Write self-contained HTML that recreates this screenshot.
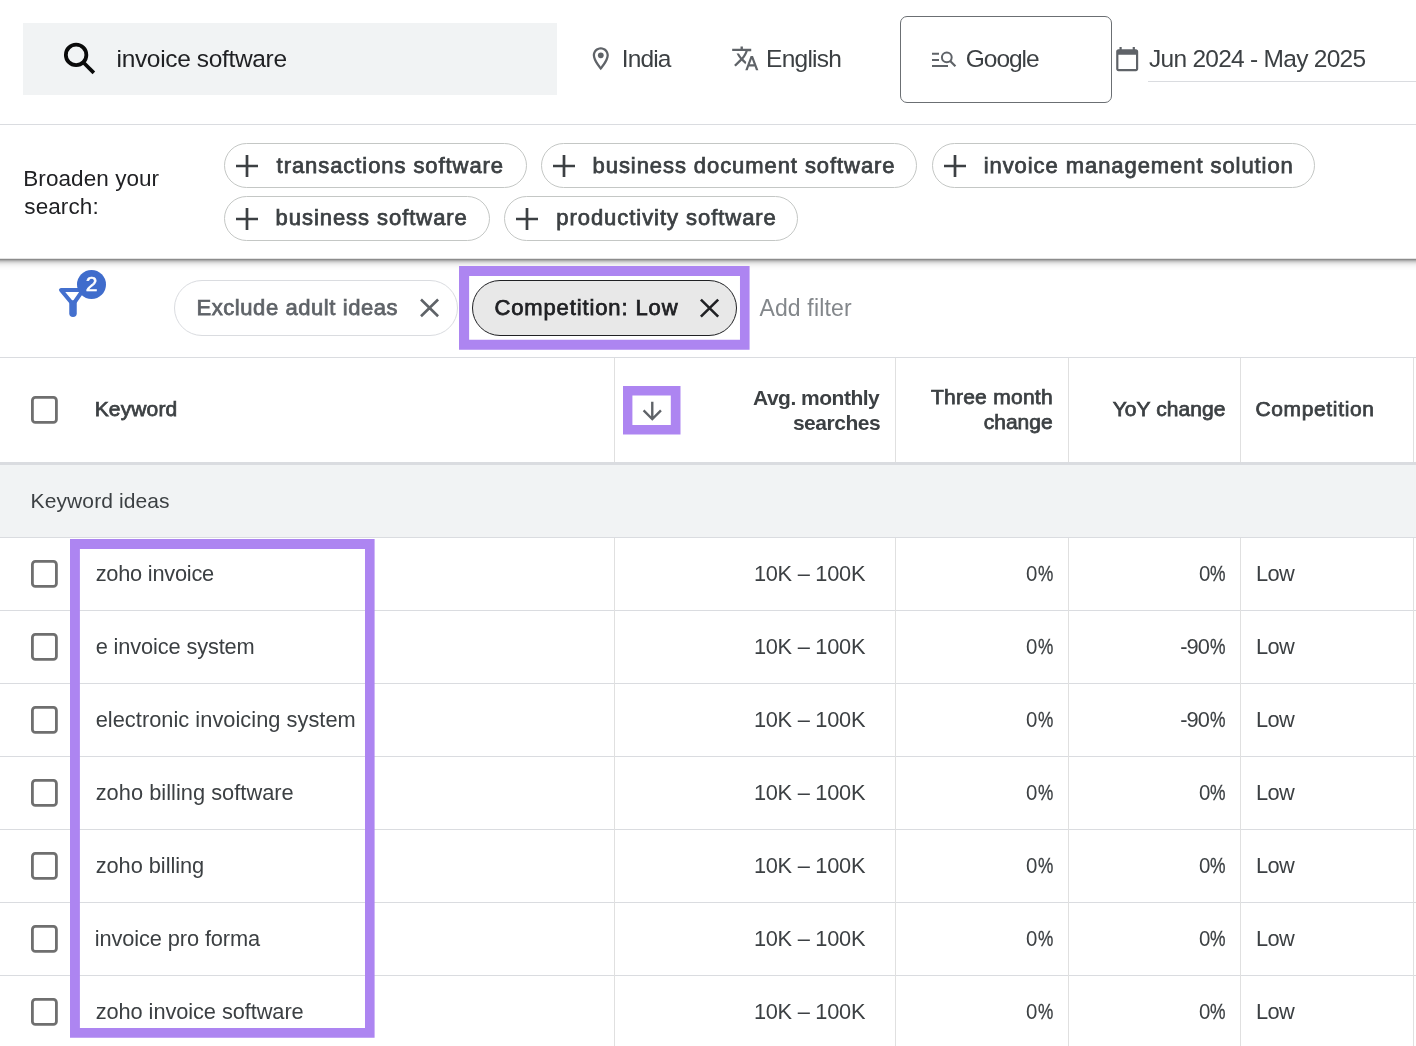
<!DOCTYPE html>
<html lang="en">
<head>
<meta charset="utf-8">
<title>Keyword ideas</title>
<style>
html,body{margin:0;padding:0;background:#fff;}
body{font-family:"Liberation Sans",sans-serif;-webkit-font-smoothing:antialiased;}
#root{position:relative;width:1416px;height:1046px;overflow:hidden;background:#fff;will-change:transform;}
#root>*{position:absolute;box-sizing:border-box;}
.t{white-space:nowrap;font-weight:400;}
.m{-webkit-text-stroke:0.75px currentColor;}
.b{font-weight:700;}
.p{-webkit-text-stroke:0.3px currentColor;}
.hl{background:#dadce0;}
.vl{background:#e0e0e0;width:1px;}
.chip{border:1px solid #c4c7c5;border-radius:23px;background:#fff;}
svg{overflow:visible;}

</style>
</head>
<body>
<div id="root">
<div style="left:23px;top:23px;width:534px;height:72px;background:#f1f3f4"></div>
<svg style="left:60px;top:40px" width="40" height="38" viewBox="60 40 40 38"><circle cx="76.1" cy="54.9" r="10.25" fill="none" stroke="#0a0a0a" stroke-width="3.8"/><path d="M83.2 62.2L93.85 72.85" stroke="#0a0a0a" stroke-width="3.7" fill="none"/></svg>
<svg style="left:586.65px;top:44.70px" width="27.60" height="27.60" viewBox="0 0 24 24" fill="#5f6368"><path d="M12 2C8.13 2 5 5.13 5 9c0 5.25 7 13 7 13s7-7.75 7-13c0-3.87-3.13-7-7-7zM7 9c0-2.76 2.24-5 5-5s5 2.24 5 5c0 2.88-2.88 7.19-5 9.88C9.92 16.21 7 11.85 7 9z"/><circle cx="12" cy="9" r="2.5"/></svg>
<svg style="left:730.81px;top:44.12px" width="28.56" height="28.56" viewBox="0 0 24 24" fill="#5f6368"><path d="M12.87 15.07l-2.54-2.51.03-.03c1.74-1.94 2.98-4.17 3.71-6.53H17V4h-7V2H8v2H1v1.99h11.17C11.5 7.92 10.44 9.75 9 11.35 8.07 10.32 7.3 9.19 6.69 8h-2c.73 1.63 1.73 3.17 2.98 4.56l-5.09 5.02L4 19l5-5 3.11 3.11.76-2.04zM18.5 10h-2L12 22h2l1.12-3h4.75L21 22h2l-4.5-12zm-2.62 7l1.62-4.33L19.12 17h-3.24z"/></svg>
<div style="left:900px;top:16px;width:212px;height:87px;border:1px solid #6b6f73;border-radius:7px"></div>
<svg style="left:930px;top:50px" width="28" height="20" viewBox="930 50 28 20"><path d="M932 53.8h7M932 59.9h7M932 65.9h16" stroke="#5f6368" stroke-width="2" fill="none"/><circle cx="946.8" cy="57.3" r="4.9" fill="none" stroke="#5f6368" stroke-width="2"/><path d="M950.2 60.9l5.2 5.3" stroke="#5f6368" stroke-width="2.2" fill="none"/></svg>
<svg style="left:1113.80px;top:46.00px" width="26.40" height="26.40" viewBox="0 0 24 24" fill="#5f6368"><path d="M20 3h-1V1h-2v2H7V1H5v2H4c-1.1 0-2 .9-2 2v16c0 1.1.9 2 2 2h16c1.1 0 2-.9 2-2V5c0-1.1-.9-2-2-2zm0 18H4V8h16v13z"/></svg>
<div class="hl" style="left:1148px;top:81px;width:268px;height:1px"></div>
<div class="hl" style="left:0;top:124px;width:1416px;height:1px"></div>
<div class="chip" style="left:224px;top:143px;width:303px;height:45px"></div>
<svg style="left:235.60px;top:154.70px" width="22" height="22" viewBox="0 0 22 22"><path d="M11 0v22M0 11h22" stroke="#3c4043" stroke-width="2.7" fill="none"/></svg>
<div class="chip" style="left:541.3px;top:143px;width:376.2px;height:45px"></div>
<svg style="left:552.90px;top:154.70px" width="22" height="22" viewBox="0 0 22 22"><path d="M11 0v22M0 11h22" stroke="#3c4043" stroke-width="2.7" fill="none"/></svg>
<div class="chip" style="left:932px;top:143px;width:382.7px;height:45px"></div>
<svg style="left:943.60px;top:154.70px" width="22" height="22" viewBox="0 0 22 22"><path d="M11 0v22M0 11h22" stroke="#3c4043" stroke-width="2.7" fill="none"/></svg>
<div class="chip" style="left:224px;top:196px;width:266px;height:45px"></div>
<svg style="left:235.60px;top:207.70px" width="22" height="22" viewBox="0 0 22 22"><path d="M11 0v22M0 11h22" stroke="#3c4043" stroke-width="2.7" fill="none"/></svg>
<div class="chip" style="left:504px;top:196px;width:294.2px;height:45px"></div>
<svg style="left:515.60px;top:207.70px" width="22" height="22" viewBox="0 0 22 22"><path d="M11 0v22M0 11h22" stroke="#3c4043" stroke-width="2.7" fill="none"/></svg>
<div style="left:0;top:258px;width:1416px;height:12px;background:linear-gradient(to bottom,#e3e3e3 0px,#e3e3e3 1px,#8c8c8c 1px,#8c8c8c 2px,#ababab 2px,#ababab 3px,#c5c5c5 3px,#c5c5c5 4px,#d7d7d7 4px,#d7d7d7 5px,#e4e4e4 5px,#e4e4e4 6px,#ededed 6px,#ededed 7px,#f3f3f3 7px,#f3f3f3 8px,#f7f7f7 8px,#f7f7f7 9px,#fafafa 9px,#fafafa 10px,#fcfcfc 10px,#fcfcfc 11px,#fdfdfd 11px,#fdfdfd 12px)"></div>
<svg style="left:55px;top:268px" width="56" height="54" viewBox="0 0 56 54"><path d="M6 22h22L18 36.5z" fill="none" stroke="#4470ce" stroke-width="4" stroke-linejoin="round"/><path d="M18 36v9.3" stroke="#4470ce" stroke-width="7.5" stroke-linecap="round" fill="none"/><circle cx="36.5" cy="16.5" r="14.5" fill="#3f6ccc"/><text x="36.5" y="22.7" text-anchor="middle" font-family="'Liberation Sans',sans-serif" font-size="21" font-weight="400" fill="#fff" stroke="#fff" stroke-width="0.6">2</text></svg>
<div style="left:174px;top:280px;width:284px;height:55.5px;border:1px solid #dadce0;border-radius:28px;background:#fff"></div>
<svg style="left:420px;top:298px" width="20" height="20" viewBox="420 298 20 20"><path d="M421 299.5L438.1 316.2M438.1 299.5L421 316.2" stroke="#5f6368" stroke-width="2.6" fill="none"/></svg>
<div style="left:472px;top:280px;width:265px;height:55.7px;border:1.3px solid #202124;border-radius:28px;background:#e8e8e8"></div>
<svg style="left:699px;top:298px" width="21" height="20" viewBox="699 298 21 20"><path d="M700.9 299.6L718.2 316.6M718.2 299.6L700.9 316.6" stroke="#202124" stroke-width="2.6" fill="none"/></svg>
<div class="hl" style="left:0;top:357px;width:1416px;height:1px"></div>
<div style="left:0;top:465px;width:1416px;height:72px;background:#f1f3f4"></div>
<div style="left:0;top:462px;width:1416px;height:3px;background:#dadce0"></div>
<div class="hl" style="left:0;top:537px;width:1416px;height:1px"></div>
<div class="hl" style="left:0;top:610px;width:1416px;height:1px"></div>
<div class="hl" style="left:0;top:683px;width:1416px;height:1px"></div>
<div class="hl" style="left:0;top:756px;width:1416px;height:1px"></div>
<div class="hl" style="left:0;top:829px;width:1416px;height:1px"></div>
<div class="hl" style="left:0;top:902px;width:1416px;height:1px"></div>
<div class="hl" style="left:0;top:975px;width:1416px;height:1px"></div>
<div class="vl" style="left:614px;top:358px;height:104px"></div>
<div class="vl" style="left:614px;top:538px;height:508px"></div>
<div class="vl" style="left:895px;top:358px;height:104px"></div>
<div class="vl" style="left:895px;top:538px;height:508px"></div>
<div class="vl" style="left:1068px;top:358px;height:104px"></div>
<div class="vl" style="left:1068px;top:538px;height:508px"></div>
<div class="vl" style="left:1240px;top:358px;height:104px"></div>
<div class="vl" style="left:1240px;top:538px;height:508px"></div>
<div class="vl" style="left:1413px;top:358px;height:104px"></div>
<div class="vl" style="left:1413px;top:538px;height:508px"></div>
<svg style="left:31.1px;top:396px" width="27" height="28" viewBox="0 0 27 28"><rect x="1.4" y="1.4" width="24" height="25" rx="3" fill="#fff" stroke="#6f6f6f" stroke-width="2.8"/></svg>
<svg style="left:31.1px;top:559.9px" width="27" height="28" viewBox="0 0 27 28"><rect x="1.4" y="1.4" width="24" height="25" rx="3" fill="#fff" stroke="#6f6f6f" stroke-width="2.8"/></svg>
<svg style="left:31.1px;top:632.9px" width="27" height="28" viewBox="0 0 27 28"><rect x="1.4" y="1.4" width="24" height="25" rx="3" fill="#fff" stroke="#6f6f6f" stroke-width="2.8"/></svg>
<svg style="left:31.1px;top:705.9px" width="27" height="28" viewBox="0 0 27 28"><rect x="1.4" y="1.4" width="24" height="25" rx="3" fill="#fff" stroke="#6f6f6f" stroke-width="2.8"/></svg>
<svg style="left:31.1px;top:778.9px" width="27" height="28" viewBox="0 0 27 28"><rect x="1.4" y="1.4" width="24" height="25" rx="3" fill="#fff" stroke="#6f6f6f" stroke-width="2.8"/></svg>
<svg style="left:31.1px;top:851.9px" width="27" height="28" viewBox="0 0 27 28"><rect x="1.4" y="1.4" width="24" height="25" rx="3" fill="#fff" stroke="#6f6f6f" stroke-width="2.8"/></svg>
<svg style="left:31.1px;top:924.9px" width="27" height="28" viewBox="0 0 27 28"><rect x="1.4" y="1.4" width="24" height="25" rx="3" fill="#fff" stroke="#6f6f6f" stroke-width="2.8"/></svg>
<svg style="left:31.1px;top:997.9px" width="27" height="28" viewBox="0 0 27 28"><rect x="1.4" y="1.4" width="24" height="25" rx="3" fill="#fff" stroke="#6f6f6f" stroke-width="2.8"/></svg>
<svg style="left:638.24px;top:397.24px" width="28.56" height="28.56" viewBox="0 0 24 24" fill="#5f6368"><path d="M20 12l-1.41-1.41L13 16.17V4h-2v12.17l-5.58-5.59L4 12l8 8 8-8z"/></svg>
<svg style="left:459px;top:266.3px" width="290.60" height="83.70" viewBox="459 266.3 290.60 83.70"><path fill="#ad85f1" fill-rule="evenodd" d="M459 266.3H749.6V350H459zM469.1 276.4V340H740V276.4z"/></svg>
<svg style="left:623.3px;top:386.2px" width="57.50" height="48.50" viewBox="623.3 386.2 57.50 48.50"><path fill="#ad85f1" fill-rule="evenodd" d="M623.3 386.2H680.8V434.7H623.3zM632.7 395.8V425.1H671.1V395.8z"/></svg>
<svg style="left:70.1px;top:539.1px" width="304.60" height="498.70" viewBox="70.1 539.1 304.60 498.70"><path fill="#ad85f1" fill-rule="evenodd" d="M70.1 539.1H374.7V1037.8H70.1zM80 549V1028.2H365.1V549z"/></svg>
<span class="t" style="left:116.6px;top:44px;font-size:24.5px;line-height:29px;letter-spacing:-0.349px;color:#202124">invoice software</span>
<span class="t" style="left:621.8px;top:44px;font-size:24.5px;line-height:29px;letter-spacing:-0.875px;color:#3c4043">India</span>
<span class="t" style="left:766.1px;top:44px;font-size:24.5px;line-height:29px;letter-spacing:-0.755px;color:#3c4043">English</span>
<span class="t" style="left:965.8px;top:44px;font-size:24.5px;line-height:29px;letter-spacing:-1.035px;color:#3c4043">Google</span>
<span class="t" style="left:1149px;top:44px;font-size:24.5px;line-height:29px;letter-spacing:-0.725px;color:#3c4043">Jun 2024 - May 2025</span>
<span class="t" style="left:23.3px;top:165px;font-size:22.5px;line-height:27px;letter-spacing:0.064px;color:#202124">Broaden your</span>
<span class="t" style="left:24.3px;top:193px;font-size:22.5px;line-height:27px;letter-spacing:0.095px;color:#202124">search:</span>
<span class="t m" style="left:276.62px;top:153px;font-size:22px;line-height:26px;letter-spacing:0.931px;color:#3c4043">transactions software</span>
<span class="t m" style="left:592.58px;top:153px;font-size:22px;line-height:26px;letter-spacing:0.927px;color:#3c4043">business document software</span>
<span class="t m" style="left:983.67px;top:153px;font-size:22px;line-height:26px;letter-spacing:0.932px;color:#3c4043">invoice management solution</span>
<span class="t m" style="left:275.62px;top:205px;font-size:22px;line-height:26px;letter-spacing:0.947px;color:#3c4043">business software</span>
<span class="t m" style="left:556.27px;top:205px;font-size:22px;line-height:26px;letter-spacing:0.953px;color:#3c4043">productivity software</span>
<span class="t m" style="left:196.38px;top:295px;font-size:22px;line-height:26px;letter-spacing:0.581px;color:#5f6368">Exclude adult ideas</span>
<span class="t m" style="left:494.38px;top:295px;font-size:22px;line-height:26px;letter-spacing:0.878px;color:#202124">Competition: Low</span>
<span class="t" style="left:759.4px;top:294px;font-size:23px;line-height:28px;letter-spacing:0.166px;color:#83878b">Add filter</span>
<span class="t m" style="left:94.67px;top:396px;font-size:21px;line-height:25px;letter-spacing:0.154px;color:#3c4043">Keyword</span>
<span class="t b" style="left:753px;top:385px;font-size:21px;line-height:25px;letter-spacing:-0.495px;color:#3c4043">Avg. monthly</span>
<span class="t b" style="left:792.9px;top:410px;font-size:21px;line-height:25px;letter-spacing:-0.457px;color:#3c4043">searches</span>
<span class="t m" style="left:930.88px;top:384px;font-size:21px;line-height:25px;letter-spacing:0.267px;color:#3c4043">Three month</span>
<span class="t m" style="left:983.67px;top:409px;font-size:21px;line-height:25px;letter-spacing:0.027px;color:#3c4043">change</span>
<span class="t m" style="left:1112.67px;top:396px;font-size:21px;line-height:25px;letter-spacing:0.07px;color:#3c4043">YoY change</span>
<span class="t m" style="left:1255.38px;top:396px;font-size:21px;line-height:25px;letter-spacing:0.657px;color:#3c4043">Competition</span>
<span class="t" style="left:30.6px;top:488px;font-size:21px;line-height:25px;letter-spacing:0.105px;color:#3c4043">Keyword ideas</span>
<span class="t" style="left:95.7px;top:561px;font-size:21.8px;line-height:26px;letter-spacing:-0.241px;color:#3c4043">zoho invoice</span>
<span class="t" style="left:753.9px;top:561px;font-size:21.8px;line-height:26px;letter-spacing:-0.265px;color:#3c4043">10K – 100K</span>
<span class="t" style="left:1025.75px;top:561px;font-size:21.8px;line-height:26px;transform:scaleX(0.9375);transform-origin:0 0;color:#3c4043">0</span>
<span class="t p" style="left:1038.0px;top:561px;font-size:21.8px;line-height:26px;transform:scaleX(0.7895);transform-origin:0 0;color:#3c4043">%</span>
<span class="t" style="left:1198.5px;top:561px;font-size:21.8px;line-height:26px;transform:scaleX(0.9375);transform-origin:0 0;color:#3c4043">0</span>
<span class="t p" style="left:1210.2px;top:561px;font-size:21.8px;line-height:26px;transform:scaleX(0.8);transform-origin:0 0;color:#3c4043">%</span>
<span class="t" style="left:1256px;top:561px;font-size:21.8px;line-height:26px;letter-spacing:-0.622px;color:#3c4043">Low</span>
<span class="t" style="left:95.7px;top:634px;font-size:21.8px;line-height:26px;letter-spacing:-0.137px;color:#3c4043">e invoice system</span>
<span class="t" style="left:753.9px;top:634px;font-size:21.8px;line-height:26px;letter-spacing:-0.265px;color:#3c4043">10K – 100K</span>
<span class="t" style="left:1025.75px;top:634px;font-size:21.8px;line-height:26px;transform:scaleX(0.9375);transform-origin:0 0;color:#3c4043">0</span>
<span class="t p" style="left:1038.0px;top:634px;font-size:21.8px;line-height:26px;transform:scaleX(0.7895);transform-origin:0 0;color:#3c4043">%</span>
<span class="t" style="left:1180.25px;top:634px;font-size:21.8px;line-height:26px;letter-spacing:-0.94px;color:#3c4043">-90</span>
<span class="t p" style="left:1210.2px;top:634px;font-size:21.8px;line-height:26px;transform:scaleX(0.8);transform-origin:0 0;color:#3c4043">%</span>
<span class="t" style="left:1256px;top:634px;font-size:21.8px;line-height:26px;letter-spacing:-0.622px;color:#3c4043">Low</span>
<span class="t" style="left:95.7px;top:707px;font-size:21.8px;line-height:26px;letter-spacing:0.031px;color:#3c4043">electronic invoicing system</span>
<span class="t" style="left:753.9px;top:707px;font-size:21.8px;line-height:26px;letter-spacing:-0.265px;color:#3c4043">10K – 100K</span>
<span class="t" style="left:1025.75px;top:707px;font-size:21.8px;line-height:26px;transform:scaleX(0.9375);transform-origin:0 0;color:#3c4043">0</span>
<span class="t p" style="left:1038.0px;top:707px;font-size:21.8px;line-height:26px;transform:scaleX(0.7895);transform-origin:0 0;color:#3c4043">%</span>
<span class="t" style="left:1180.25px;top:707px;font-size:21.8px;line-height:26px;letter-spacing:-0.94px;color:#3c4043">-90</span>
<span class="t p" style="left:1210.2px;top:707px;font-size:21.8px;line-height:26px;transform:scaleX(0.8);transform-origin:0 0;color:#3c4043">%</span>
<span class="t" style="left:1256px;top:707px;font-size:21.8px;line-height:26px;letter-spacing:-0.622px;color:#3c4043">Low</span>
<span class="t" style="left:95.7px;top:780px;font-size:21.8px;line-height:26px;letter-spacing:0.027px;color:#3c4043">zoho billing software</span>
<span class="t" style="left:753.9px;top:780px;font-size:21.8px;line-height:26px;letter-spacing:-0.265px;color:#3c4043">10K – 100K</span>
<span class="t" style="left:1025.75px;top:780px;font-size:21.8px;line-height:26px;transform:scaleX(0.9375);transform-origin:0 0;color:#3c4043">0</span>
<span class="t p" style="left:1038.0px;top:780px;font-size:21.8px;line-height:26px;transform:scaleX(0.7895);transform-origin:0 0;color:#3c4043">%</span>
<span class="t" style="left:1198.5px;top:780px;font-size:21.8px;line-height:26px;transform:scaleX(0.9375);transform-origin:0 0;color:#3c4043">0</span>
<span class="t p" style="left:1210.2px;top:780px;font-size:21.8px;line-height:26px;transform:scaleX(0.8);transform-origin:0 0;color:#3c4043">%</span>
<span class="t" style="left:1256px;top:780px;font-size:21.8px;line-height:26px;letter-spacing:-0.622px;color:#3c4043">Low</span>
<span class="t" style="left:95.7px;top:853px;font-size:21.8px;line-height:26px;letter-spacing:-0.049px;color:#3c4043">zoho billing</span>
<span class="t" style="left:753.9px;top:853px;font-size:21.8px;line-height:26px;letter-spacing:-0.265px;color:#3c4043">10K – 100K</span>
<span class="t" style="left:1025.75px;top:853px;font-size:21.8px;line-height:26px;transform:scaleX(0.9375);transform-origin:0 0;color:#3c4043">0</span>
<span class="t p" style="left:1038.0px;top:853px;font-size:21.8px;line-height:26px;transform:scaleX(0.7895);transform-origin:0 0;color:#3c4043">%</span>
<span class="t" style="left:1198.5px;top:853px;font-size:21.8px;line-height:26px;transform:scaleX(0.9375);transform-origin:0 0;color:#3c4043">0</span>
<span class="t p" style="left:1210.2px;top:853px;font-size:21.8px;line-height:26px;transform:scaleX(0.8);transform-origin:0 0;color:#3c4043">%</span>
<span class="t" style="left:1256px;top:853px;font-size:21.8px;line-height:26px;letter-spacing:-0.622px;color:#3c4043">Low</span>
<span class="t" style="left:94.7px;top:926px;font-size:21.8px;line-height:26px;letter-spacing:-0.104px;color:#3c4043">invoice pro forma</span>
<span class="t" style="left:753.9px;top:926px;font-size:21.8px;line-height:26px;letter-spacing:-0.265px;color:#3c4043">10K – 100K</span>
<span class="t" style="left:1025.75px;top:926px;font-size:21.8px;line-height:26px;transform:scaleX(0.9375);transform-origin:0 0;color:#3c4043">0</span>
<span class="t p" style="left:1038.0px;top:926px;font-size:21.8px;line-height:26px;transform:scaleX(0.7895);transform-origin:0 0;color:#3c4043">%</span>
<span class="t" style="left:1198.5px;top:926px;font-size:21.8px;line-height:26px;transform:scaleX(0.9375);transform-origin:0 0;color:#3c4043">0</span>
<span class="t p" style="left:1210.2px;top:926px;font-size:21.8px;line-height:26px;transform:scaleX(0.8);transform-origin:0 0;color:#3c4043">%</span>
<span class="t" style="left:1256px;top:926px;font-size:21.8px;line-height:26px;letter-spacing:-0.622px;color:#3c4043">Low</span>
<span class="t" style="left:95.7px;top:999px;font-size:21.8px;line-height:26px;letter-spacing:-0.079px;color:#3c4043">zoho invoice software</span>
<span class="t" style="left:753.9px;top:999px;font-size:21.8px;line-height:26px;letter-spacing:-0.265px;color:#3c4043">10K – 100K</span>
<span class="t" style="left:1025.75px;top:999px;font-size:21.8px;line-height:26px;transform:scaleX(0.9375);transform-origin:0 0;color:#3c4043">0</span>
<span class="t p" style="left:1038.0px;top:999px;font-size:21.8px;line-height:26px;transform:scaleX(0.7895);transform-origin:0 0;color:#3c4043">%</span>
<span class="t" style="left:1198.5px;top:999px;font-size:21.8px;line-height:26px;transform:scaleX(0.9375);transform-origin:0 0;color:#3c4043">0</span>
<span class="t p" style="left:1210.2px;top:999px;font-size:21.8px;line-height:26px;transform:scaleX(0.8);transform-origin:0 0;color:#3c4043">%</span>
<span class="t" style="left:1256px;top:999px;font-size:21.8px;line-height:26px;letter-spacing:-0.622px;color:#3c4043">Low</span>
</div>
</body>
</html>
